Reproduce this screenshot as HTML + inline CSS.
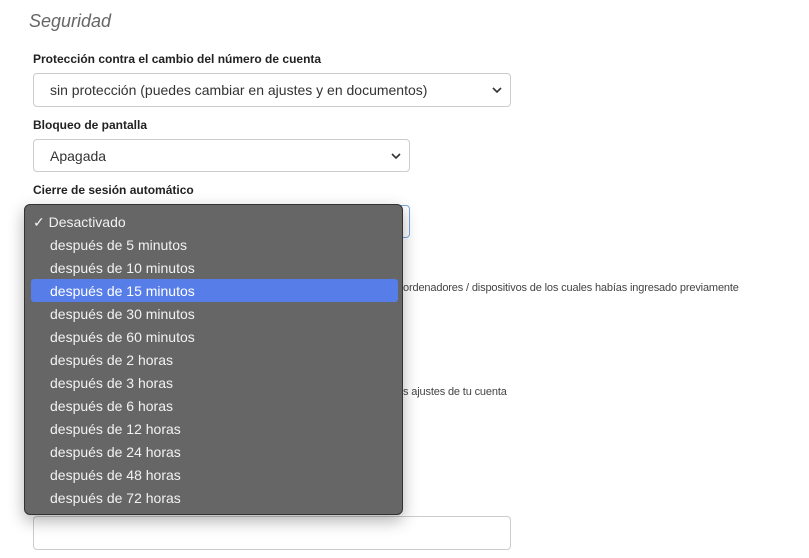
<!DOCTYPE html>
<html><head><meta charset="utf-8"><style>
body{margin:0;width:809px;height:558px;background:#fff;font-family:"Liberation Sans",sans-serif;position:relative;overflow:hidden;color:#222}
h2{position:absolute;left:29px;top:11px;margin:0;font-weight:normal;font-style:italic;font-size:18px;color:#666}
.lbl{position:absolute;left:33px;font-weight:bold;font-size:12px;color:#222}
.sel{position:absolute;left:33px;height:32px;border:1px solid #ccc;border-radius:4px;background:#fff;font-size:14px;color:#333;box-sizing:border-box;padding:8px 0 0 16px}
.sel svg{position:absolute;right:8px;top:12px}
.small{position:absolute;font-size:11px;color:#444;letter-spacing:-0.15px}
.dd{position:absolute;left:24px;top:204px;width:379px;height:311px;background:#666;border:1px solid #333;border-radius:6px;box-sizing:border-box;box-shadow:0 6px 16px rgba(0,0,0,.3)}
.it{position:absolute;left:25px;font-size:14px;color:#f2f2f2;height:23px;line-height:23px}
.hl{position:absolute;left:6px;top:74px;width:367px;height:23px;background:#577ee8;border-radius:3px}
</style></head><body>
<h2>Seguridad</h2>
<div class="lbl" style="top:52px">Protección contra el cambio del número de cuenta</div>
<div class="sel" style="top:73px;width:478px;height:34px">sin protección (puedes cambiar en ajustes y en documentos)<svg width="10" height="8" viewBox="0 0 10 8"><path d="M1 2l4 4 4-4" stroke="#333" stroke-width="1.6" fill="none"/></svg></div>
<div class="lbl" style="top:118px">Bloqueo de pantalla</div>
<div class="sel" style="top:139px;width:377px;height:33px">Apagada<svg width="10" height="8" viewBox="0 0 10 8"><path d="M1 2l4 4 4-4" stroke="#333" stroke-width="1.6" fill="none"/></svg></div>
<div class="lbl" style="top:183px">Cierre de sesión automático</div>
<div class="sel" style="top:205px;width:377px;height:33px;border-color:#7aa7e0"></div>
<div class="small" style="left:403px;top:282px">ordenadores / dispositivos de los cuales habías ingresado previamente</div>
<div class="small" style="left:403px;top:386px">s ajustes de tu cuenta</div>
<div class="sel" style="top:516px;width:478px;height:34px"></div>
<div class="dd">
<div class="hl"></div>
<div class="it" style="left:8px;top:6px">✓ Desactivado</div>
<div class="it" style="top:29px">después de 5 minutos</div>
<div class="it" style="top:52px">después de 10 minutos</div>
<div class="it" style="top:75px;color:#fff">después de 15 minutos</div>
<div class="it" style="top:98px">después de 30 minutos</div>
<div class="it" style="top:121px">después de 60 minutos</div>
<div class="it" style="top:144px">después de 2 horas</div>
<div class="it" style="top:167px">después de 3 horas</div>
<div class="it" style="top:190px">después de 6 horas</div>
<div class="it" style="top:213px">después de 12 horas</div>
<div class="it" style="top:236px">después de 24 horas</div>
<div class="it" style="top:259px">después de 48 horas</div>
<div class="it" style="top:282px">después de 72 horas</div>
</div>
</body></html>
